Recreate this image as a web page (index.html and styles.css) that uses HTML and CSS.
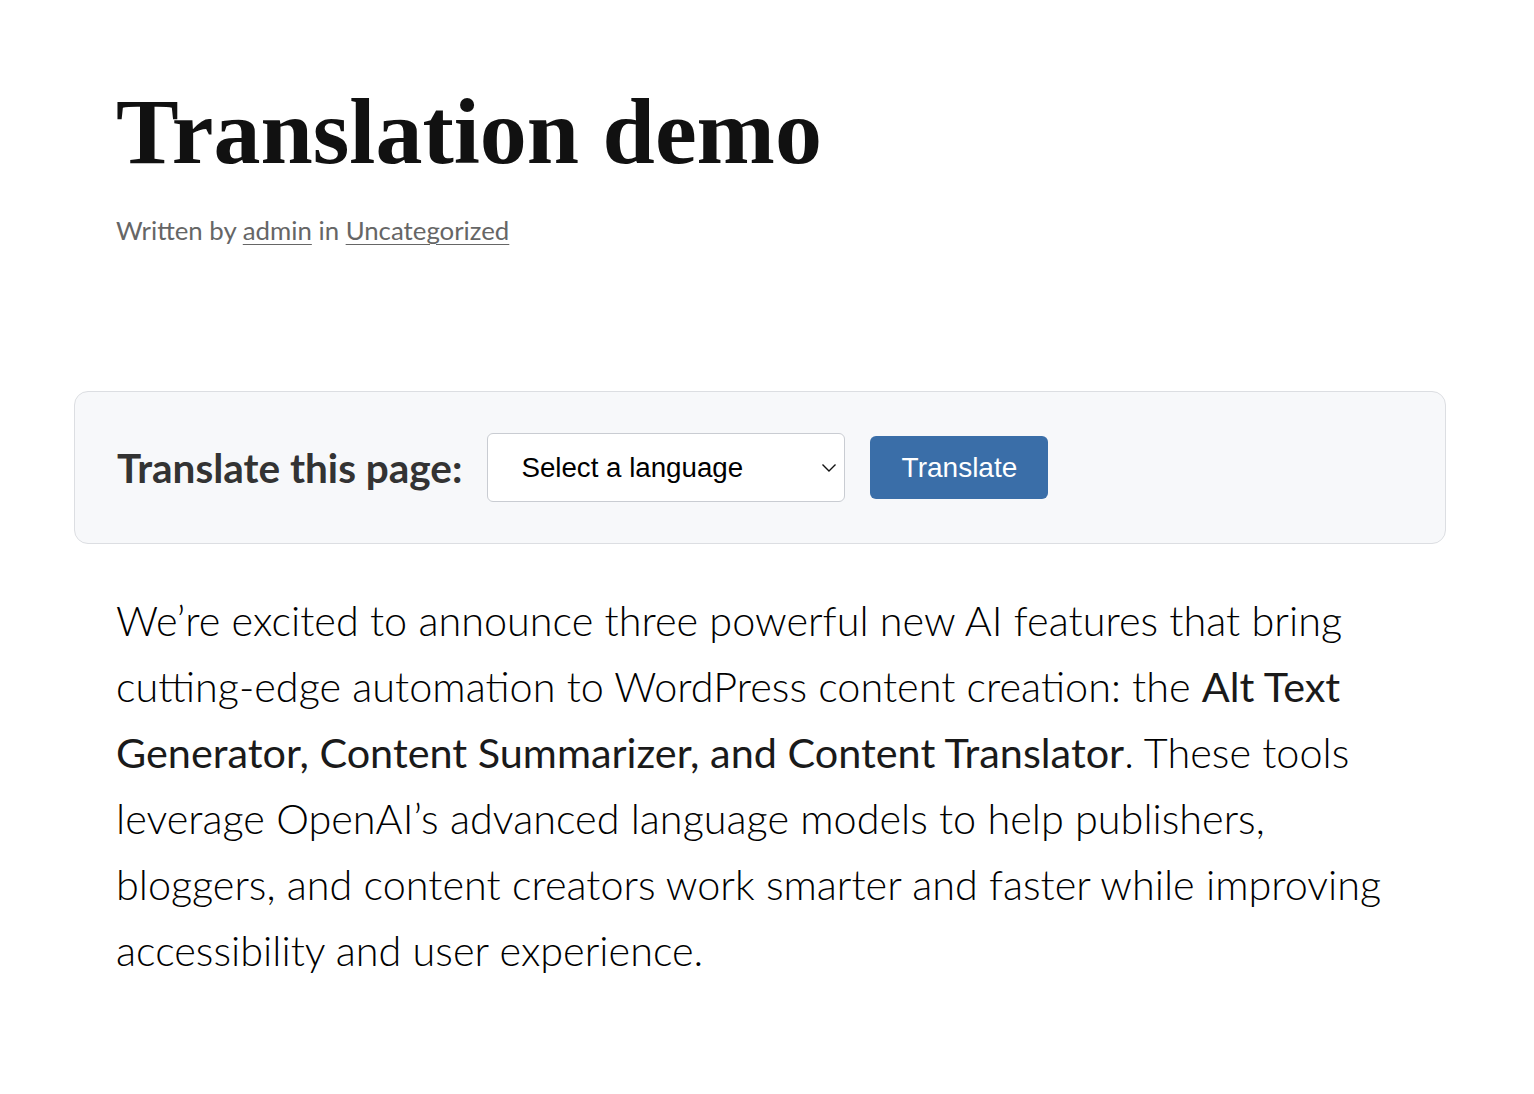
FILE: index.html
```html
<!DOCTYPE html>
<html lang="en">
<head>
    <meta charset="UTF-8">
    <meta name="viewport" content="width=device-width, initial-scale=1.0">
    <title>Translation demo</title>
    <link rel="stylesheet" href="styles.css">
</head>
<body>
    <main class="wrap">
        <header class="post-header">
            <h1 class="post-title">Translation demo</h1>
            <p class="post-meta">Written by <a href="#">admin</a> in <a href="#">Uncategorized</a></p>
        </header>

        <form class="translate-box">
            <label for="lang-select" class="translate-label">Translate this page:</label>
            <div class="select-wrap">
                <select id="lang-select">
                    <option value="">Select a language</option>
                    <option value="es">Spanish</option>
                    <option value="fr">French</option>
                    <option value="de">German</option>
                </select>
                <svg class="chevron" width="16" height="10" viewBox="0 0 16 10"><path d="M1.5 1.5 L8 8 L14.5 1.5" fill="none" stroke="#111" stroke-width="1.4"/></svg>
            </div>
            <button type="button" class="translate-button">Translate</button>
        </form>

        <div class="post-content">
            <p>We’re excited to announce three powerful new AI features that bring cutting-edge automation to WordPress content creation: the <strong>Alt Text Generator, Content Summarizer, and Content Translator</strong>. These tools leverage OpenAI’s advanced language models to help publishers, bloggers, and content creators work smarter and faster while improving accessibility and user experience.</p>
        </div>
    </main>
</body>
</html>
```

FILE: styles.css
```css
*{
    margin: 0;
    padding: 0;
    box-sizing: border-box;
}
body{
    font-family: "Lato", "Noto Sans", sans-serif;
    color: #1a1a1a;
    background: #fff;
}
a{
    color: inherit;
}
.wrap{
    width: 1372px;
    margin-left: 74px;
    padding-top: 77px;
}
.post-header{
    padding-left: 42px;
}
.post-title{
    font-family: "Liberation Serif", "DejaVu Serif", serif;
    font-weight: 700;
    font-size: 94px;
    line-height: 108px;
    color: #111;
}
.post-meta{
    margin-top: 30px;
    font-size: 25.8px;
    color: #666;
}
.post-meta a{
    text-underline-offset: 4px;
    text-decoration-thickness: 1px;
}
.translate-box{
    display: flex;
    align-items: center;
    gap: 25px;
    margin-top: 146px;
    padding: 41px 42px;
    background: #f7f8fa;
    border: 1.5px solid #dcdee2;
    border-radius: 14px;
}
.translate-label{
    font-size: 40.5px;
    font-weight: 700;
    color: #333;
}
.select-wrap{
    position: relative;
}
#lang-select{
    appearance: none;
    -webkit-appearance: none;
    width: 358px;
    height: 69px;
    padding-left: 33px;
    font-family: "Liberation Sans", Arial, sans-serif;
    font-size: 27.7px;
    color: #000;
    background: #fff;
    border: 1.5px solid #c9ccd2;
    border-radius: 6px;
}
.chevron{
    position: absolute;
    right: 8px;
    top: 30px;
    pointer-events: none;
}
.translate-button{
    width: 178px;
    height: 63px;
    font-family: "Liberation Sans", Arial, sans-serif;
    font-size: 28px;
    color: #fff;
    background: #3a6ea8;
    border: none;
    border-radius: 6px;
    cursor: pointer;
}
.post-content{
    padding: 43px 42px 0;
}
.post-content p{
    max-width: 1280px;
    font-size: 41.4px;
    font-weight: 300;
    line-height: 66px;
    color: #000;
}
.post-content strong{
    font-weight: 400;
    color: #1a1a1a;
}
```
